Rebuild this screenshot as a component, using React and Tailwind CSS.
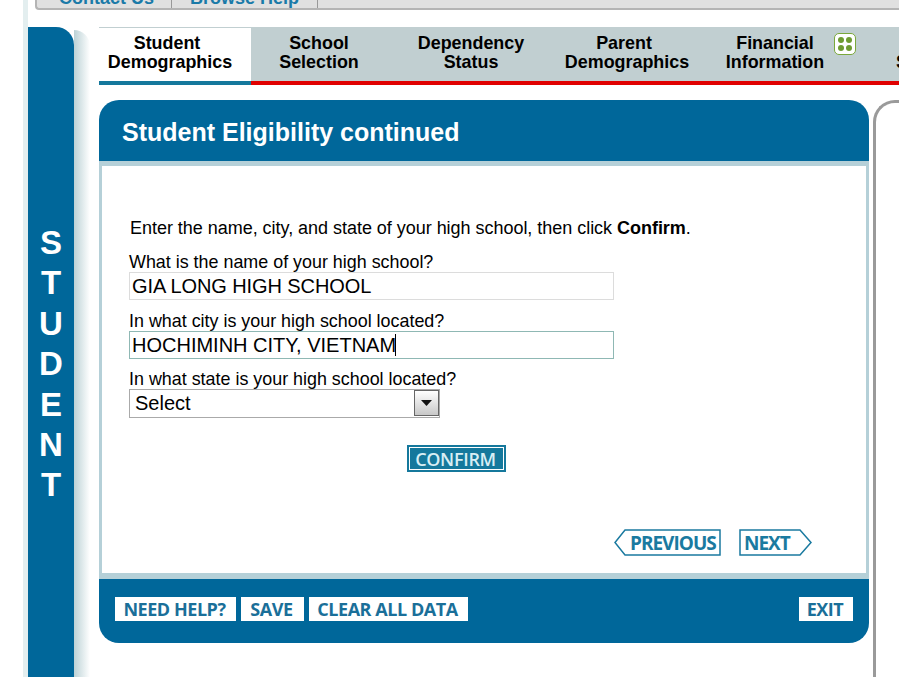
import React from "react";

const tabs = [
  { top: "School", bottom: "Selection", w: "w-[136px]" },
  { top: "Dependency", bottom: "Status", w: "w-[168px]" },
  { top: "Parent", bottom: "Demographics", w: "w-[144px]", topPr: "pr-[6px]" },
  { top: "Financial", bottom: "Information", w: "w-[152px]" },
];

const SmallButton = ({ children, className = "" }) => (
  <button className={`h-[24px] bg-white text-[#1a6f99] font-bold text-[18px] leading-[24px] tracking-[-0.45px] text-center pr-[2px] ${className}`}>
    {children}
  </button>
);

const App = () => {
  return (
    <div className="relative w-[899px] h-[677px] overflow-hidden bg-white font-['Liberation_Sans',Arial,sans-serif] text-black">
      {/* browser chrome strip on the left */}
      <div className="absolute left-[23px] top-0 bottom-0 w-[5px] bg-[#e3eeef]" />

      {/* top nav, mostly scrolled away */}
      <div className="ml-[35px] h-[10px] overflow-hidden rounded-bl-[4px] border-l-2 border-b-2 border-[#b4b4b4] bg-[#e0e0e0] flex font-bold text-[18px] text-[#1a7aa8] leading-[20px]">
        <div className="w-[135px] h-[10px] border-r border-[#999] pl-[22px]"><span className="block -mt-[12px]">Contact Us</span></div>
        <div className="w-[146px] h-[10px] border-r border-[#999] pl-[18px]"><span className="block -mt-[12px]">Browse Help</span></div>
      </div>

      <div className="flex mt-[17px] ml-[28px]">
        {/* sidebar */}
        <div className="relative z-10 w-[46px] h-[650px] shrink-0 rounded-tr-[18px] bg-[#00679a] pt-[196px] flex flex-col items-center text-white font-bold text-[33px] leading-[40.4px]">
          {"STUDENT".split("").map((c, i) => (
            <span key={i}>{c}</span>
          ))}
        </div>
        <div className="w-[16px] h-[647px] mt-[3px] shrink-0 rounded-tr-[16px] bg-gradient-to-r from-[#bcd2d6] to-white" />

        <div className="ml-[9px] w-[800px] shrink-0">
          {/* tabs */}
          <div className="flex h-[58px] border-t border-[#c1cfd1] bg-[#c1cfd1] font-bold text-[17.9px] leading-[19px] text-center">
            <div className="w-[152px] h-[57px] pt-[6px] pr-[10px] bg-white border-b-4 border-[#15789c]">
              <div className="pr-[6px]">Student</div>
              <div>Demographics</div>
            </div>
            <div className="flex flex-1 border-b-4 border-[#e00000] pt-[6px] overflow-hidden">
              {tabs.map((t) => (
                <div key={t.top} className={`${t.w} shrink-0 relative`}>
                  {t.top === "Financial" ? (
                    <span className="absolute left-[135px] top-[-1px] w-[22px] h-[22px] rounded-[5px] border-[1.5px] border-[#7aa83c] bg-white grid grid-cols-2 gap-[2px] p-[3px]">
                      <i className="rounded-full bg-[#6f9c32]" />
                      <i className="rounded-full bg-[#6f9c32]" />
                      <i className="rounded-full bg-[#6f9c32]" />
                      <i className="rounded-full bg-[#6f9c32]" />
                    </span>
                  ) : null}
                  <div className={t.topPr}>{t.top}</div>
                  <div>{t.bottom}</div>
                </div>
              ))}
              <div className="shrink-0 pl-[45px] text-left">
                <div className="pl-[12px]">Sign &amp;</div>
                <div>Submit</div>
              </div>
            </div>
          </div>

          <div className="flex mt-[15px]">
            {/* main panel */}
            <div className="w-[770px] shrink-0">
              <div className="h-[61px] rounded-t-[20px] bg-[#00679a] pl-[23px] pt-[17px] text-white font-bold text-[25px] leading-[31px]">
                Student Eligibility continued
              </div>
              <div className="h-[418px] border-x-[3px] border-t-[5px] border-b-[6px] border-[#b5d0d8] bg-white">
                <div className="pl-[27px] pt-[53px] text-[17.9px] leading-[18px]">
                  <p className="pl-px text-[18px] tracking-[-0.03px]">
                    Enter the name, city, and state of your high school, then click <b>Confirm</b>.
                  </p>
                  <label className="block mt-[16px]">What is the name of your high school?</label>
                  <input
                    readOnly
                    value="GIA LONG HIGH SCHOOL"
                    className="block w-[485px] h-[28px] mt-[1px] border border-[#dcdcdc] px-[2px] text-[20px] tracking-[-0.1px] outline-none"
                  />
                  <label className="block mt-[12px]">In what city is your high school located?</label>
                  <div className="relative w-[485px] mt-[1px]">
                    <input
                      readOnly
                      value="HOCHIMINH CITY, VIETNAM"
                      className="block w-[485px] h-[28px] border border-[#8fb8b4] px-[2px] text-[20px] outline-none"
                    />
                    <span className="absolute left-[266px] top-[3px] w-px h-[22px] bg-black" />
                  </div>
                  <label className="block mt-[11px]">In what state is your high school located?</label>
                  <div className="relative w-[311px] mt-[1px]">
                    <select className="block w-[311px] h-[29px] pb-[2px] appearance-none rounded-none border border-[#aaa] bg-white pl-[5px] text-[20px] outline-none">
                      <option>Select</option>
                    </select>
                    <span className="absolute right-[1px] top-[1px] w-[25px] h-[26px] border border-[#666] bg-gradient-to-b from-white to-[#c8c8c8] flex items-center justify-center">
                      <svg width="11" height="6" viewBox="0 0 11 6">
                        <path d="M0 0h11L5.5 6z" fill="#111" />
                      </svg>
                    </span>
                  </div>
                  <div className="mt-[27px] ml-[278px] w-[99px] h-[27px] border-2 border-[#15789c] bg-white p-px">
                    <button className="block w-full h-full bg-[#15789c] text-[#d8eef4] font-['Open_Sans',sans-serif] font-semibold text-[18px] leading-[21px] tracking-[-0.3px] pt-[1px] pr-[2px]">
                      CONFIRM
                    </button>
                  </div>
                  <div className="flex mt-[57px] ml-[485px] gap-[18px] font-['Open_Sans',sans-serif] font-bold text-[19px] leading-[29px] text-[#1a7aa0] tracking-[-1px]">
                    <button className="relative w-[107px] h-[27px] pl-[16px] text-left">
                      <svg className="absolute inset-0" width="107" height="27" viewBox="0 0 107 27">
                        <path d="M106 1H11L1 13.5 11 26h95z" fill="none" stroke="#1a7aa0" strokeWidth="1.5" />
                      </svg>
                      PREVIOUS
                    </button>
                    <button className="relative w-[73px] h-[27px] pl-[5px] text-left">
                      <svg className="absolute inset-0" width="73" height="27" viewBox="0 0 73 27">
                        <path d="M1 1h60l11 12.5L61 26H1z" fill="none" stroke="#1a7aa0" strokeWidth="1.5" />
                      </svg>
                      NEXT
                    </button>
                  </div>
                </div>
              </div>
              <div className="h-[64px] rounded-b-[20px] bg-[#00679a] pt-[18px] pl-[16px] pr-[16px] flex gap-[5px] font-['Open_Sans',sans-serif]">
                <SmallButton className="w-[121px]">NEED HELP?</SmallButton>
                <SmallButton className="w-[63px]">SAVE</SmallButton>
                <SmallButton className="w-[159px]">CLEAR ALL DATA</SmallButton>
                <SmallButton className="w-[54px] ml-auto">EXIT</SmallButton>
              </div>
            </div>
            {/* side panel, cut off by the window */}
            <div className="w-[60px] h-[600px] ml-[4px] shrink-0 rounded-tl-[22px] border-l-[3px] border-t-[3px] border-[#9a9a9a] bg-white" />
          </div>
        </div>
      </div>
    </div>
  );
};

export default App;
